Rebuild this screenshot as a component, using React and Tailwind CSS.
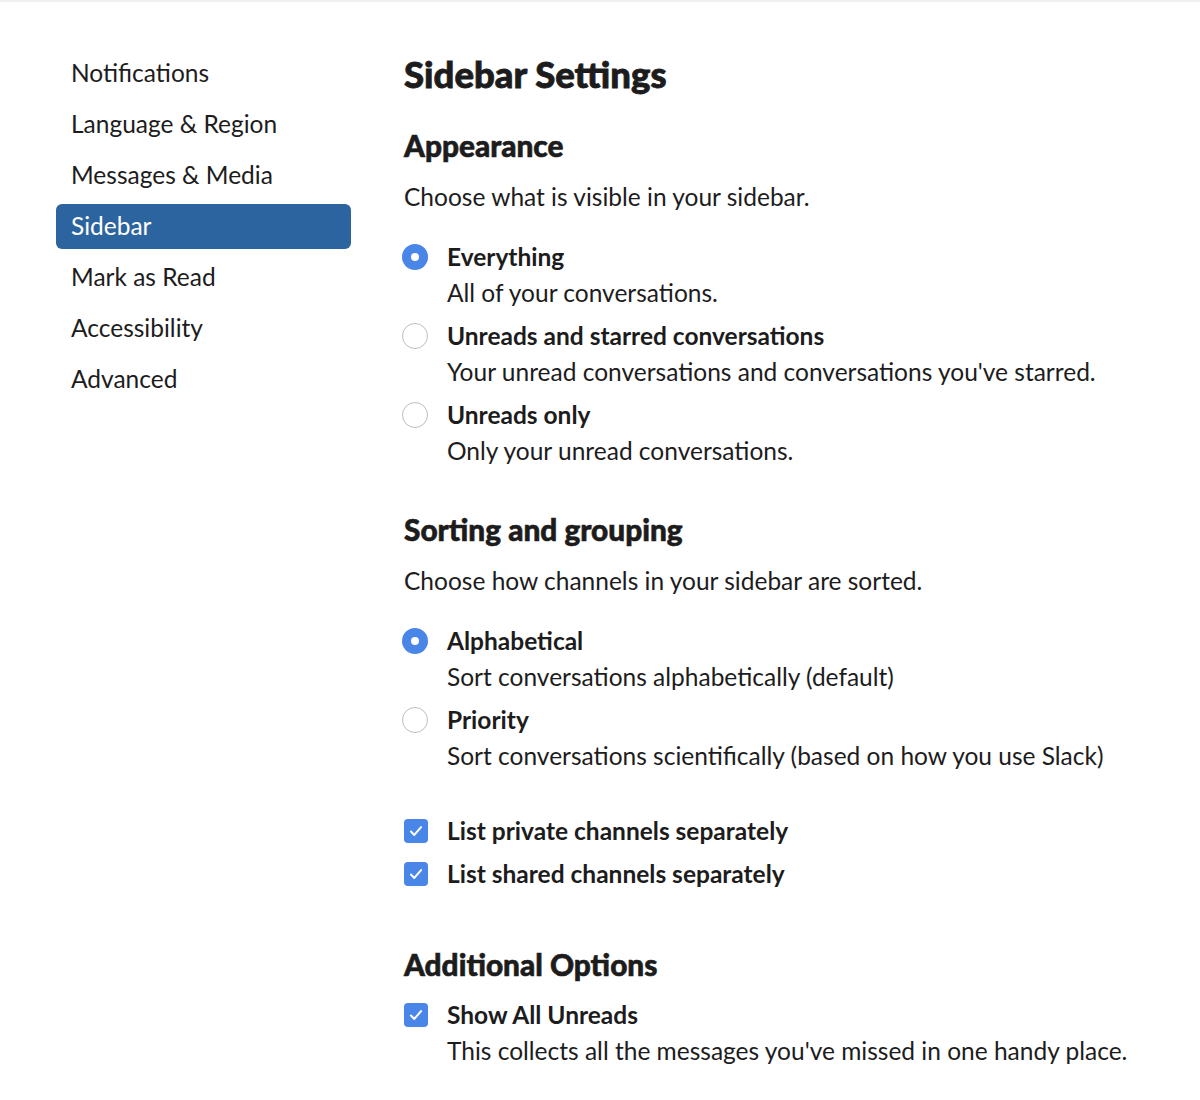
import React from 'react';

const navItems = ['Notifications', 'Language & Region', 'Messages & Media', 'Sidebar', 'Mark as Read', 'Accessibility', 'Advanced'];

const Radio = ({ checked }) =>
  checked ? (
    <span className="w-[26px] h-[26px] rounded-full bg-[#4a86e8] flex items-center justify-center shrink-0">
      <span className="w-[8px] h-[8px] rounded-full bg-white"></span>
    </span>
  ) : (
    <span className="w-[26px] h-[26px] rounded-full border border-[#bdbdbd] bg-white shrink-0"></span>
  );

const Check = () => (
  <span className="w-[24px] h-[24px] rounded-[4px] bg-[#4a86e8] flex items-center justify-center shrink-0">
    <svg width="18" height="18" viewBox="0 0 16 16" fill="none" stroke="white" strokeWidth="1.8" strokeLinecap="round" strokeLinejoin="round">
      <path d="M3.5 8.5l3 3 6-7" />
    </svg>
  </span>
);

const Option = ({ checked, title, desc, className = '' }) => (
  <div className={`flex ${className}`}>
    <div className="h-[36px] flex items-center -ml-[2px]">
      <Radio checked={checked} />
    </div>
    <div className="ml-[19px]">
      <p className="h-[36px] leading-[36px] font-bold text-[24.5px]">{title}</p>
      <p className="h-[36px] leading-[36px] text-[24.5px]">{desc}</p>
    </div>
  </div>
);

const CheckRow = ({ title, desc, className = '' }) => (
  <div className={`flex ${className}`}>
    <div className="h-[36px] flex items-center">
      <Check />
    </div>
    <div className="ml-[19px]">
      <p className="h-[36px] leading-[36px] font-bold text-[24.5px]">{title}</p>
      {desc && <p className="h-[36px] leading-[36px] text-[24.5px]">{desc}</p>}
    </div>
  </div>
);

export default function App() {
  return (
    <div className="w-[1200px] h-[1100px] bg-white border-t-2 border-[#f0f0f0] text-[#1d1c1d] flex" style={{ fontFamily: 'Lato, "Noto Sans", sans-serif' }}>
      <nav className="w-[404px] shrink-0 pl-[56px] pt-[49px]">
        {navItems.map((item) => (
          <div
            key={item}
            className={`w-[295px] h-[45px] mb-[6px] px-[15px] flex items-center rounded-[6px] text-[24.5px] ${item === 'Sidebar' ? 'bg-[#2c64a0] text-white' : ''}`}
          >
            {item}
          </div>
        ))}
      </nav>

      <main className="flex-1 pt-[50px]">
        <h1 className="text-[36.5px] leading-[44px] font-black [-webkit-text-stroke:0.8px_#1d1c1d]">Sidebar Settings</h1>

        <h2 className="mt-[32px] text-[29.8px] leading-[36px] font-black [-webkit-text-stroke:0.6px_#1d1c1d]">Appearance</h2>
        <p className="mt-[18px] text-[24.5px] leading-[30px]">Choose what is visible in your sidebar.</p>
        <div className="mt-[27px]">
          <Option checked title="Everything" desc="All of your conversations." />
          <Option className="mt-[7px]" title="Unreads and starred conversations" desc="Your unread conversations and conversations you've starred." />
          <Option className="mt-[7px]" title="Unreads only" desc="Only your unread conversations." />
        </div>

        <h2 className="mt-[43px] text-[29.8px] leading-[36px] font-black [-webkit-text-stroke:0.6px_#1d1c1d]">Sorting and grouping</h2>
        <p className="mt-[18px] text-[24.5px] leading-[30px]">Choose how channels in your sidebar are sorted.</p>
        <div className="mt-[27px]">
          <Option checked title="Alphabetical" desc="Sort conversations alphabetically (default)" />
          <Option className="mt-[7px]" title="Priority" desc="Sort conversations scientifically (based on how you use Slack)" />
        </div>

        <div className="mt-[39px]">
          <CheckRow title="List private channels separately" />
          <CheckRow className="mt-[7px]" title="List shared channels separately" />
        </div>

        <h2 className="mt-[55px] text-[29.8px] leading-[36px] font-black [-webkit-text-stroke:0.6px_#1d1c1d]">Additional Options</h2>
        <CheckRow className="mt-[14px]" title="Show All Unreads" desc="This collects all the messages you've missed in one handy place." />
      </main>
    </div>
  );
}
